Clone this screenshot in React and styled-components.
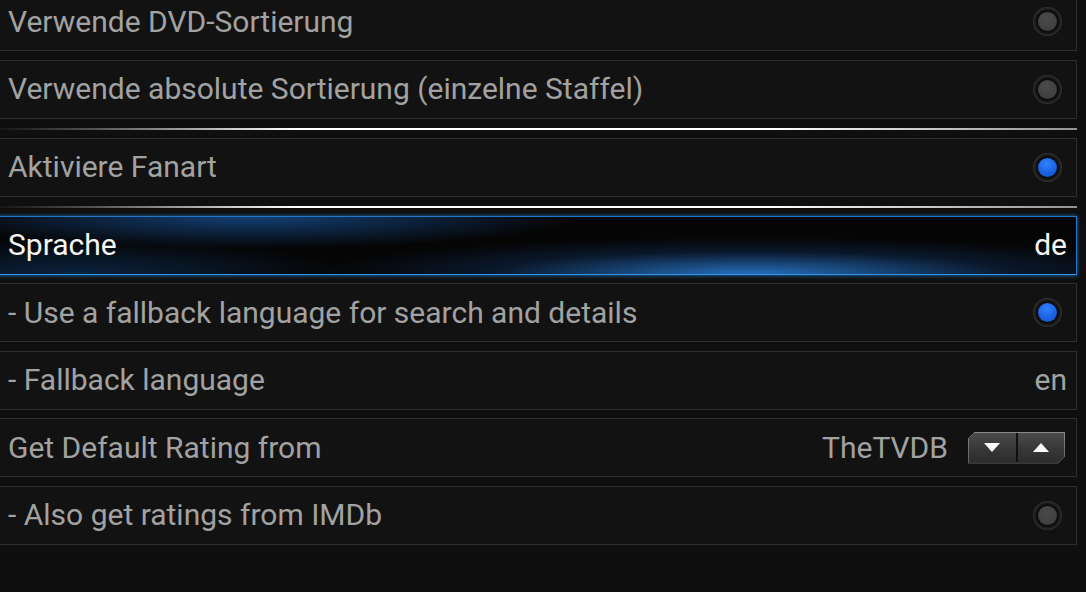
import styled, { createGlobalStyle } from 'styled-components';

const GlobalStyle = createGlobalStyle`
    html, body {
        margin: 0;
        padding: 0;
        background: #0f0f0f;
        overflow: hidden;
    }
    body {
        font-family: Roboto, "Liberation Sans", sans-serif;
    }
`;

const Page = styled.div`
    width: 1086px;
    height: 592px;
    overflow: hidden;
    background: #0f0f0f;
`;

const List = styled.div`
    display: flex;
    flex-direction: column;
    width: 1087px;
    margin: -8px 0 0 -10px;
`;

const Row = styled.div`
    box-sizing: border-box;
    height: 59px;
    flex-shrink: 0;
    display: flex;
    align-items: center;
    padding: 0 9px 0 17px;
    margin-bottom: ${(p) => (p.$last ? '0' : '8.5px')};
    border: 1px solid ${(p) => (p.$focused ? '#1f78cc' : '#2d2d2d')};
    border-bottom-color: ${(p) => (p.$focused ? '#2e95ee' : '#2d2d2d')};
    background: ${(p) =>
        p.$focused
            ? `radial-gradient(ellipse 40% 65% at 70% 100%, rgba(46, 136, 232, 0.8), rgba(24, 80, 158, 0.25) 60%, transparent 100%),
               radial-gradient(ellipse 30% 55% at 24% 0%, rgba(28, 100, 188, 0.6), transparent 100%),
               radial-gradient(ellipse 25% 60% at 8% 100%, rgba(20, 80, 150, 0.4), transparent 100%),
               #050505`
            : '#121212'};
    box-shadow: ${(p) =>
        p.$focused ? '0 1px 4px rgba(40, 140, 230, 0.55), 0 -1px 3px rgba(40, 140, 230, 0.3)' : 'none'};
`;

const Label = styled.span`
    flex: 1;
    font-size: 30px;
    line-height: 1;
    color: ${(p) => (p.$focused ? '#f6f6f6' : '#a2a2a2')};
    white-space: nowrap;
`;

const Value = styled.span`
    font-size: 30px;
    line-height: 1;
    color: ${(p) => (p.$focused ? '#f6f6f6' : '#a2a2a2')};
`;

const Separator = styled.div`
    height: 19px;
    flex-shrink: 0;
    display: flex;
    align-items: center;
    &::after {
        content: '';
        display: block;
        width: 100%;
        height: 2px;
        margin-top: 1px;
        background: linear-gradient(
            to right,
            transparent 0%,
            rgba(255, 255, 255, 0.3) 10%,
            #ffffff 28%,
            #ffffff 72%,
            rgba(255, 255, 255, 0.55) 100%
        );
    }
`;

const Radio = styled.div`
    width: 29px;
    height: 29px;
    margin-right: 5px;
    border-radius: 50%;
    background: radial-gradient(circle at 50% 50%, #111 55%, #2b2b2b 68%, #5e5e5e 80%, #1a1a1a 100%);
    display: flex;
    align-items: center;
    justify-content: center;
    &::after {
        content: '';
        width: 19px;
        height: 19px;
        border-radius: 50%;
        background: ${(p) =>
            p.$on
                ? 'radial-gradient(circle at 45% 30%, #2f82ff 0%, #1a5fe0 60%, #1448b0 100%)'
                : 'radial-gradient(circle at 45% 35%, #4a4a4a 0%, #424242 60%, #383838 100%)'};
        box-shadow: 0 0 0 1px #0a0a0a;
    }
`;

const SpinWrap = styled.div`
    display: flex;
    align-items: center;
    gap: 20px;
`;

const SpinBox = styled.div`
    width: 97px;
    height: 32px;
    margin-right: 2px;
    box-sizing: border-box;
    padding: 1px;
    background: linear-gradient(to bottom, #8a8a8a, #5e5e5e);
    clip-path: polygon(7px 0, 100% 0, 100% calc(100% - 7px), calc(100% - 7px) 100%, 0 100%, 0 7px);
`;

const SpinInner = styled.div`
    display: flex;
    height: 100%;
    gap: 2px;
    background: #101010;
    clip-path: polygon(6px 0, 100% 0, 100% calc(100% - 6px), calc(100% - 6px) 100%, 0 100%, 0 6px);
`;

const SpinButton = styled.div`
    flex: 1;
    display: flex;
    align-items: center;
    justify-content: center;
    background: linear-gradient(to bottom, #4c4c4c 0%, #383838 50%, #2c2c2c 100%);
`;

const Arrow = styled.div`
    width: 0;
    height: 0;
    border-left: 8.5px solid transparent;
    border-right: 8.5px solid transparent;
    ${(p) => (p.$up ? 'border-bottom: 9px solid #ffffff;' : 'border-top: 9px solid #ffffff;')}
`;

const items = [
    { type: 'toggle', label: 'Verwende DVD-Sortierung', on: false },
    { type: 'toggle', label: 'Verwende absolute Sortierung (einzelne Staffel)', on: false },
    { type: 'separator' },
    { type: 'toggle', label: 'Aktiviere Fanart', on: true },
    { type: 'separator' },
    { type: 'value', label: 'Sprache', value: 'de', focused: true },
    { type: 'toggle', label: '- Use a fallback language for search and details', on: true },
    { type: 'value', label: '- Fallback language', value: 'en' },
    { type: 'spinner', label: 'Get Default Rating from', value: 'TheTVDB' },
    { type: 'toggle', label: '- Also get ratings from IMDb', on: false },
];

const SettingRow = ({ item, last }) => {
    const { type, label, value, on, focused } = item;

    return (
        <Row $focused={focused} $last={last}>
            <Label $focused={focused}>{label}</Label>
            {type === 'toggle' && <Radio $on={on} />}
            {type === 'value' && <Value $focused={focused}>{value}</Value>}
            {type === 'spinner' && (
                <SpinWrap>
                    <Value>{value}</Value>
                    <SpinBox>
                        <SpinInner>
                            <SpinButton>
                                <Arrow />
                            </SpinButton>
                            <SpinButton>
                                <Arrow $up />
                            </SpinButton>
                        </SpinInner>
                    </SpinBox>
                </SpinWrap>
            )}
        </Row>
    );
};

const App = () => {
    return (
        <Page>
            <GlobalStyle />
            <List>
                {items.map((item, i) => {
                    const next = items[i + 1];
                    if (item.type === 'separator') return <Separator key={i} />;
                    const beforeSep = next && next.type === 'separator';
                    return <SettingRow key={i} item={item} last={beforeSep} />;
                })}
            </List>
        </Page>
    );
};

export default App;
